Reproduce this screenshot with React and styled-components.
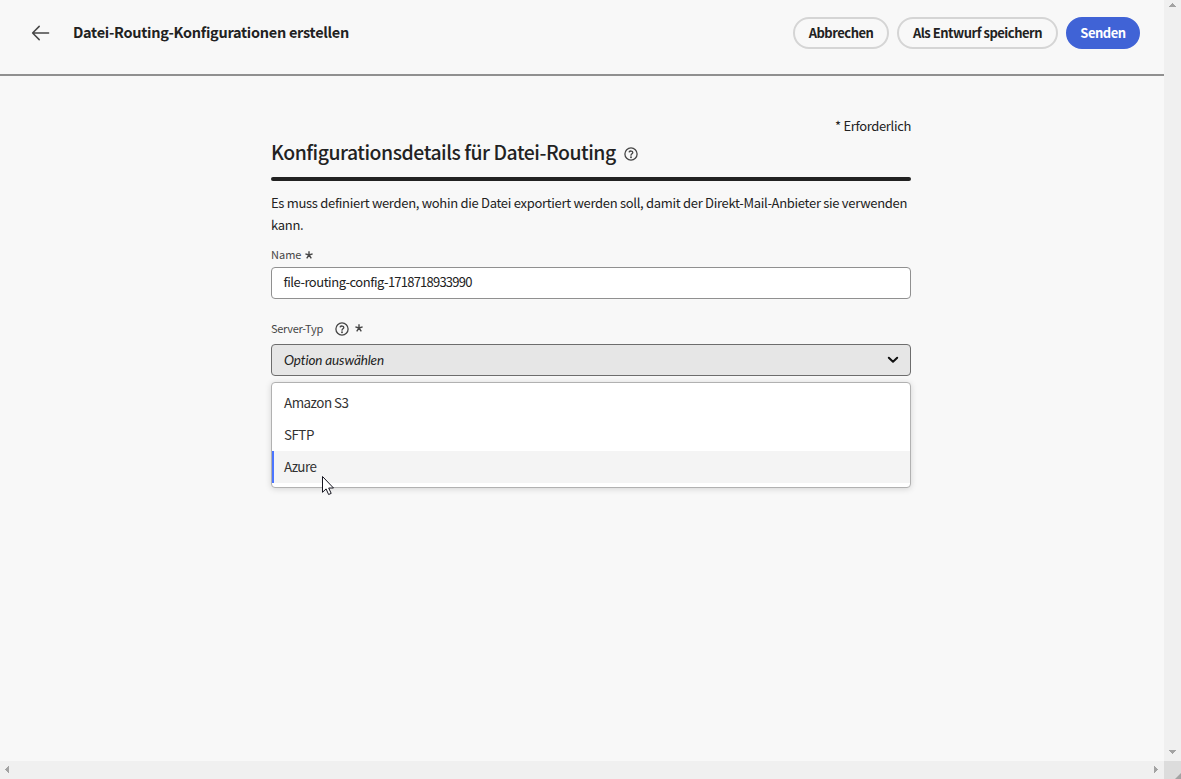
import React from "react";
import styled, { createGlobalStyle, css } from "styled-components";

const GlobalStyle = createGlobalStyle`
  * { box-sizing: border-box; }
  body {
    margin: 0;
    overflow: hidden;
    background: #f8f8f8;
    color: #222;
    font-family: "Noto Sans CJK SC", "Open Sans", sans-serif;
    font-size: 14px;
  }
`;

const Window = styled.div`
  position: relative;
  display: grid;
  grid-template-columns: 1fr 17px;
  grid-template-rows: 1fr 18px;
  width: 1181px;
  height: 779px;
`;

const Page = styled.div`
  min-width: 0;
`;

const Header = styled.header`
  display: flex;
  align-items: center;
  height: 76px;
  padding: 0 24px 8px 31px;
  border-bottom: 2px solid #909090;
`;

const PageTitle = styled.h1`
  flex: 1;
  margin: 0 0 0 23px;
  padding-bottom: 3px;
  font-size: 14.5px;
  font-weight: 700;
  line-height: 20px;
  white-space: nowrap;
  letter-spacing: -0.28px;
`;

const Actions = styled.div`
  display: flex;
  gap: 8px;
`;

const Button = styled.button`
  width: ${(p) => p.$width}px;
  height: 32px;
  padding: 0;
  border: 2px solid ${(p) => (p.$primary ? "#4063d6" : "#d5d5d5")};
  border-radius: 16px;
  background: ${(p) => (p.$primary ? "#4063d6" : "transparent")};
  color: ${(p) => (p.$primary ? "#fff" : "#222")};
  font: 700 13px/26px "Noto Sans CJK SC", "Open Sans", sans-serif;
  letter-spacing: -0.5px;
  white-space: nowrap;
`;

const Form = styled.main`
  width: 640px;
  margin: 40px 0 0 271px;
`;

const Required = styled.div`
  text-align: right;
  font-size: 13px;
  line-height: 20px;
  letter-spacing: -0.34px;
`;

const SectionHead = styled.div`
  display: flex;
  align-items: center;
  gap: 8px;
  height: 41px;
  padding-bottom: 5px;
`;

const SectionTitle = styled.h2`
  margin: 0;
  padding-bottom: 4px;
  font-size: 19.4px;
  font-weight: 500;
  line-height: 26px;
  white-space: nowrap;
  letter-spacing: -0.46px;
`;

const Rule = styled.div`
  height: 4px;
  border-radius: 2px;
  background: #222;
`;

const Description = styled.p`
  margin: 11px 0 0;
  font-size: 13px;
  line-height: 22px;
  letter-spacing: -0.3px;
`;

const Label = styled.div`
  display: flex;
  align-items: center;
  height: 20px;
  margin-top: ${(p) => p.$top}px;
  color: #464646;
  font-size: 11px;
  line-height: 20px;
`;

const LabelText = styled.span`
  padding-bottom: 2px;
  letter-spacing: ${(p) => p.$ls || 0}px;
  margin-right: ${(p) => p.$gap}px;
`;

const field = css`
  display: flex;
  align-items: center;
  justify-content: space-between;
  height: 32px;
  border-radius: 4px;
  line-height: 20px;
`;

const TextField = styled.div`
  ${field}
  margin-top: 2px;
  padding: 0 12px 3px 11.5px;
  border: 1px solid #909090;
  background: #fff;
  font-size: 13px;
  letter-spacing: ${(p) => p.$ls || 0}px;
`;

const Name = styled.span`
  letter-spacing: -0.48px;
`;

const Digits = styled.span`
  letter-spacing: -0.78px;
`;

const Picker = styled.div`
  ${field}
  margin-top: 5px;
  padding: 0 11px 0 12px;
  border: 1px solid #6d6d6d;
  background: #e6e6e6;
  font-family: Lato, "Open Sans", sans-serif;
  font-size: 13.5px;
  font-style: italic;
  letter-spacing: -0.13px;
`;

const Menu = styled.ul`
  height: 106px;
  margin: 6px 0 0;
  padding: 4px 0;
  border: 1px solid #b1b1b1;
  border-radius: 4px;
  background: #fff;
  box-shadow: 0 1px 6px rgba(0, 0, 0, 0.15);
  list-style: none;
`;

const Option = styled.li`
  display: flex;
  align-items: center;
  height: 32px;
  padding: 0 0 3px 10px;
  border-left: 2px solid ${(p) => (p.$active ? "#4b75ff" : "transparent")};
  background: ${(p) => (p.$active ? "#f4f4f4" : "transparent")};
  color: #323232;
  font-size: 13.4px;
  line-height: 20px;
  letter-spacing: -0.5px;
`;

const VerticalBar = styled.div`
  display: flex;
  flex-direction: column;
  justify-content: space-between;
  align-items: center;
  padding: 3px 0 7px;
  background: #f0f0f0;
`;

const HorizontalBar = styled.div`
  display: flex;
  justify-content: space-between;
  align-items: center;
  padding: 0 6px 1px 5px;
  background: #f0f0f0;
`;

const Corner = styled.div`
  display: flex;
  align-items: flex-end;
  justify-content: flex-end;
  background: #dcdcdc;
`;

const Pointer = styled.svg`
  position: absolute;
  left: 321px;
  top: 475px;
`;

const RequiredMark = styled.svg`
  margin: 0 0 ${(p) => p.$lift || 0}px ${(p) => p.$gap || 0}px;
`;

const BackArrow = () => (
  <svg width="19" height="16" viewBox="0 0 19 16" fill="none" stroke="#464646" strokeWidth="1.5" strokeLinecap="round" strokeLinejoin="round">
    <path d="M8.2 1.4 1.6 8l6.6 6.6M1.6 8h16" />
  </svg>
);

const HelpIcon = () => (
  <svg width="14" height="14" viewBox="0 0 14 14" fill="none" stroke="#464646" strokeWidth="1.3" strokeLinecap="round">
    <circle cx="7" cy="7" r="6.1" />
    <path d="M5.2 4.9C5.8 3.7 8.8 3.6 8.8 5.4c0 1.2-1.8 1.4-1.8 2.8" />
    <circle cx="7" cy="10.2" r=".95" fill="#464646" stroke="none" />
  </svg>
);

const Asterisk = ({ gap, lift }) => (
  <RequiredMark $gap={gap} $lift={lift} width="8" height="8" viewBox="0 0 8 8" stroke="#464646" strokeWidth="1.4">
    <path d="M4 4V.2M4 4 .4 2.9M4 4l3.6-1.1M4 4 1.7 7.3M4 4l2.3 3.3" />
  </RequiredMark>
);

const Chevron = () => (
  <svg width="12" height="8" viewBox="0 0 12 8" fill="none" stroke="#111" strokeWidth="2" strokeLinecap="round" strokeLinejoin="round">
    <path d="M1.8 1.8 6 5.8l4.2-4" />
  </svg>
);

const Arrow = ({ w, h, d }) => (
  <svg width={w} height={h} viewBox={`0 0 ${w} ${h}`} fill="#a3a3a3" shapeRendering="crispEdges">
    <path d={d} />
  </svg>
);

export default function App() {
  return (
    <>
      <GlobalStyle />
      <Window>
        <Page>
          <Header>
            <BackArrow />
            <PageTitle>Datei-Routing-Konfigurationen erstellen</PageTitle>
            <Actions>
              <Button $width={96}>Abbrechen</Button>
              <Button $width={161}>Als Entwurf speichern</Button>
              <Button $width={74} $primary>Senden</Button>
            </Actions>
          </Header>
          <Form>
            <Required>* Erforderlich</Required>
            <SectionHead>
              <SectionTitle>Konfigurationsdetails für Datei-Routing</SectionTitle>
              <HelpIcon />
            </SectionHead>
            <Rule />
            <Description>
              Es muss definiert werden, wohin die Datei exportiert werden soll, damit der Direkt-Mail-Anbieter sie verwenden
              kann.
            </Description>
            <Label $top={9}>
              <LabelText $gap={4}>Name</LabelText>
              <Asterisk />
            </Label>
            <TextField>
              <span>
                <Name>file-routing-config-</Name>
                <Digits>1718718933990</Digits>
              </span>
            </TextField>
            <Label $top={20}>
              <LabelText $gap={12} $ls={-0.3}>Server-Typ</LabelText>
              <HelpIcon />
              <Asterisk gap={6} lift={2} />
            </Label>
            <Picker>
              <span>Option auswählen</span>
              <Chevron />
            </Picker>
            <Menu>
              <Option>Amazon S3</Option>
              <Option>SFTP</Option>
              <Option $active>Azure</Option>
            </Menu>
          </Form>
        </Page>
        <VerticalBar>
          <Arrow w={7} h={4} d="M0 4 3.5 0 7 4Z" />
          <Arrow w={7} h={4} d="M0 0h7L3.5 4Z" />
        </VerticalBar>
        <HorizontalBar>
          <Arrow w={4} h={7} d="M4 0v7L0 3.5Z" />
          <Arrow w={4} h={7} d="M0 0v7l4-3.5Z" />
        </HorizontalBar>
        <Corner>
          <svg width="6" height="6" viewBox="0 0 6 6" fill="#a3a3a3"><path d="M6 0v6H0Z" /></svg>
        </Corner>
        <Pointer width="14" height="21" viewBox="0 0 14 21" fill="#fff" stroke="#15151f" strokeWidth="1">
          <path d="M1.5 1.5v15.8l3.6-3.4 2.5 5.6 2.6-1.1-2.5-5.4h4.8Z" />
        </Pointer>
      </Window>
    </>
  );
}
